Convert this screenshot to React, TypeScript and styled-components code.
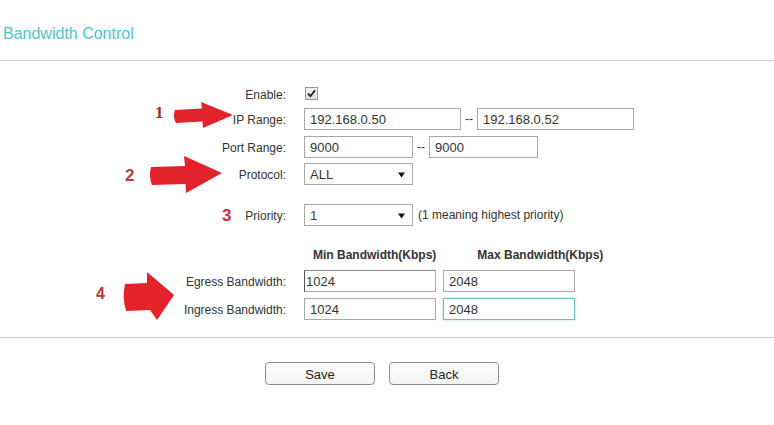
import React from "react";
import styled, { createGlobalStyle, css } from "styled-components";

const GlobalStyle = createGlobalStyle`
  html, body {
    margin: 0;
    padding: 0;
    background: #ffffff;
  }
  body {
    font-family: "Liberation Sans", Arial, sans-serif;
    color: #333333;
  }
`;

const Page = styled.div`
  position: relative;
  width: 774px;
  min-height: 425px;
`;

const Header = styled.header`
  height: 61px;
  box-sizing: border-box;
  padding: 25px 0 0 3px;
  border-bottom: 1px solid #cccccc;
`;

const Title = styled.h1`
  margin: 0;
  font-size: 16px;
  line-height: 18px;
  font-weight: normal;
  color: #4fc3cf;
`;

const Form = styled.section`
  padding: 22px 0 17px;
  border-bottom: 1px solid #cccccc;
  display: flex;
  flex-direction: column;
`;

const Row = styled.div<{ $mt?: number; $h?: number }>`
  display: flex;
  align-items: center;
  height: ${(p) => p.$h ?? 22}px;
  margin-top: ${(p) => p.$mt ?? 0}px;
`;

const Label = styled.label`
  width: 304px;
  box-sizing: border-box;
  padding-right: 18px;
  padding-top: 2px;
  text-align: right;
  font-size: 12px;
  color: #333333;
  white-space: nowrap;
`;

const Field = styled.div`
  display: flex;
  align-items: center;
`;

const CheckBox = styled.span`
  width: 11px;
  height: 11px;
  margin: 0 0 2px 1px;
  border: 1px solid #9a9a9a;
  background: linear-gradient(#f4f4f4, #dcdcdc);
  display: flex;
  align-items: center;
  justify-content: center;
`;

const TextInput = styled.input<{ $w: number; $focus?: boolean; $scrolled?: boolean }>`
  width: ${(p) => p.$w}px;
  height: 22px;
  box-sizing: border-box;
  border: 1px solid #a9a9a9;
  padding: 1px 5px 0;
  margin: 0;
  font-family: "Liberation Sans", Arial, sans-serif;
  font-size: 13px;
  color: #333333;
  background: #ffffff;
  outline: none;
  ${(p) =>
    p.$focus &&
    css`
      border-color: #62c2c8;
      box-shadow: 0 0 2px rgba(98, 194, 200, 0.6);
    `}
  ${(p) =>
    p.$scrolled &&
    css`
      padding-left: 1px;
      border-left-color: #555555;
      border-top-color: #888888;
    `}
`;

const Dash = styled.span`
  margin: 0 4px;
  font-size: 12px;
  color: #333333;
`;

const SelectBox = styled.div`
  width: 109px;
  height: 22px;
  box-sizing: border-box;
  border: 1px solid #a9a9a9;
  padding: 1px 7px 0 5px;
  display: flex;
  align-items: center;
  justify-content: space-between;
  font-size: 13px;
  color: #333333;
  background: #ffffff;
`;

const Hint = styled.span`
  margin-left: 5px;
  font-size: 12px;
  color: #333333;
`;

const ColumnHeads = styled.div`
  display: flex;
  gap: 41px;
  padding: 2px 0 0 9px;
`;

const ColumnHead = styled.span`
  font-size: 12px;
  font-weight: bold;
  color: #333333;
`;

const Pair = styled.div`
  display: flex;
  gap: 7px;
`;

const Footer = styled.div`
  display: flex;
  gap: 14px;
  padding: 24px 0 0 265px;
`;

const Button = styled.button`
  width: 110px;
  height: 23px;
  box-sizing: border-box;
  border: 1px solid #8e8e8e;
  border-radius: 4px;
  background: linear-gradient(#ffffff, #f2f2f2);
  font-family: "Liberation Sans", Arial, sans-serif;
  font-size: 13px;
  color: #222222;
  padding: 1px 0 0;
`;

const Notes = styled.svg`
  position: absolute;
  top: 0;
  left: 0;
  pointer-events: none;
`;

const Caret = () => (
  <svg width="7" height="6" viewBox="0 0 7 6">
    <path d="M0 0.5 H7 L3.5 5.5 Z" fill="#111" />
  </svg>
);

const Tick = () => (
  <svg width="9" height="9" viewBox="0 0 9 9">
    <path d="M1 4.6 L3.4 7.2 L8 1.4" stroke="#222" strokeWidth="1.8" fill="none" />
  </svg>
);

export default function App() {
  return (
    <Page>
      <GlobalStyle />
      <Header>
        <Title>Bandwidth Control</Title>
      </Header>

      <Form>
        <Row>
          <Label>Enable:</Label>
          <Field>
            <CheckBox>
              <Tick />
            </CheckBox>
          </Field>
        </Row>

        <Row $mt={3}>
          <Label>IP Range:</Label>
          <Field>
            <TextInput $w={157} defaultValue="192.168.0.50" />
            <Dash>--</Dash>
            <TextInput $w={157} defaultValue="192.168.0.52" />
          </Field>
        </Row>

        <Row $mt={6}>
          <Label>Port Range:</Label>
          <Field>
            <TextInput $w={109} defaultValue="9000" />
            <Dash>--</Dash>
            <TextInput $w={109} defaultValue="9000" />
          </Field>
        </Row>

        <Row $mt={5}>
          <Label>Protocol:</Label>
          <Field>
            <SelectBox>
              <span>ALL</span>
              <Caret />
            </SelectBox>
          </Field>
        </Row>

        <Row $mt={19}>
          <Label>Priority:</Label>
          <Field>
            <SelectBox>
              <span>1</span>
              <Caret />
            </SelectBox>
            <Hint>(1 meaning highest priority)</Hint>
          </Field>
        </Row>

        <Row $mt={18} $h={20}>
          <Label />
          <ColumnHeads>
            <ColumnHead>Min Bandwidth(Kbps)</ColumnHead>
            <ColumnHead>Max Bandwidth(Kbps)</ColumnHead>
          </ColumnHeads>
        </Row>

        <Row $mt={6}>
          <Label>Egress Bandwidth:</Label>
          <Pair>
            <TextInput $w={132} $scrolled defaultValue="1024" />
            <TextInput $w={132} defaultValue="2048" />
          </Pair>
        </Row>

        <Row $mt={5} $h={23}>
          <Label>Ingress Bandwidth:</Label>
          <Pair>
            <TextInput $w={132} defaultValue="1024" />
            <TextInput $w={132} $focus defaultValue="2048" />
          </Pair>
        </Row>
      </Form>

      <Footer>
        <Button>Save</Button>
        <Button>Back</Button>
      </Footer>

      {/* red step markers drawn over the form */}
      <Notes width="774" height="425" viewBox="0 0 774 425">
        <g fill="#e3232b">
          <path d="M175 110 L202 108.5 L201 102 L233 115 L203 128 L202.5 121.5 L176 123 Q172.5 116.5 175 110 Z" />
          <path d="M151 167 L185 166 L184 156 L222 173 L186 193 L185.5 184 L152 185 Q148.5 176 151 167 Z" />
          <path d="M125 284 L147 283 L147 272 L174 295 L157 320 L150 310 L126 311 Q122 297 125 284 Z" />
        </g>
        <g fontFamily="'Liberation Sans', Arial, sans-serif" fontWeight="bold">
          <text x="155" y="118" fontSize="17" fill="#a8262c" fontFamily="'Liberation Serif', 'Times New Roman', serif">1</text>
          <text x="125" y="181" fontSize="17" fill="#c33a40">2</text>
          <text x="222" y="221" fontSize="17" fill="#cc2f45">3</text>
          <text x="96" y="299" fontSize="16" fill="#c4353c">4</text>
        </g>
      </Notes>
    </Page>
  );
}
